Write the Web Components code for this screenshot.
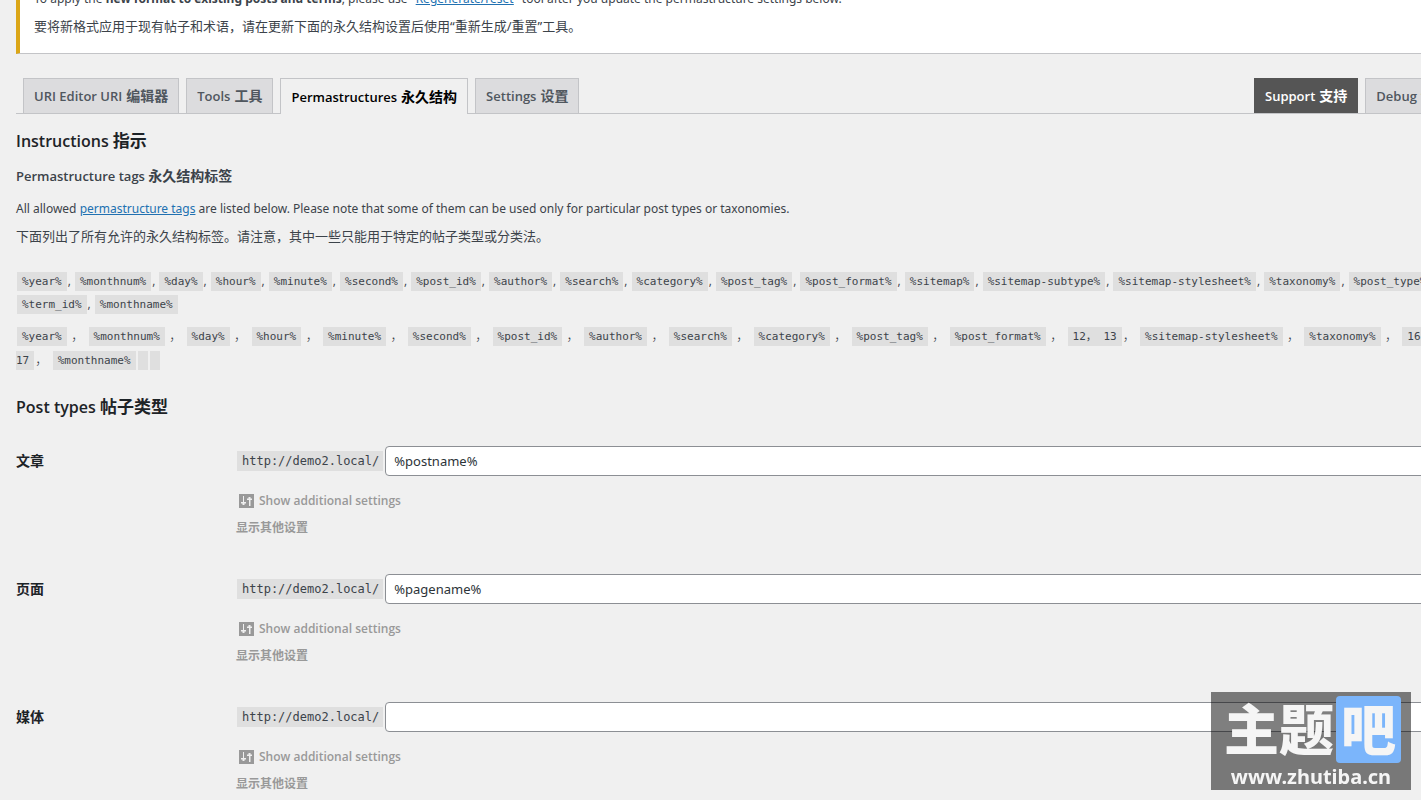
<!DOCTYPE html>
<html lang="en">
<head>
<meta charset="utf-8">
<title>Permalink Manager</title>
<style>
  html { overflow: hidden; background: #f0f0f0; }
  body {
    margin: 0; color: #3c434a; overflow: hidden;
    font: 12px/20px "Noto Sans", "Noto Sans CJK SC", sans-serif;
    --zh: 13px; --line: #c3c4c7;
    --semi: "Open Sans", "Noto Sans CJK SC", sans-serif;
  }
</style>
</head>
<body>
<permalink-page></permalink-page>
<site-watermark></site-watermark>

<script>
const define = (name, html) => customElements.define(name, class extends HTMLElement {
  connectedCallback() {
    if (this.shadowRoot) return;
    const t = document.createElement('template');
    t.innerHTML = typeof html === 'function' ? html(this) : html;
    this.attachShadow({ mode: 'open' }).append(t.content.cloneNode(true));
  }
});

/* warning notice */
define('admin-notice', `
<style>
  :host { display: block; background: #fff; border: 1px solid var(--line); border-left: 4px solid #dba617; padding: 12px 14px 10px; }
</style><slot></slot>`);

/* navigation tabs */
define('nav-tabs', `
<style>
  :host { display: block; }
  nav { display: flex; gap: 7px; padding-left: 7px; border-bottom: 1px solid var(--line); }
  .end { display: flex; gap: 7px; margin-left: auto; width: 187px; }
</style>
<nav><slot></slot><div class="end"><slot name="end"></slot></div></nav>`);

define('nav-tab', el => `
<style>
  :host { display: block; flex: none; }
  a { display: flex; align-items: center; gap: 4px; box-sizing: border-box; height: 35px; padding: 0 10px; border: 1px solid var(--line); border-bottom: 0;
      background: #dcdcde; color: #50575e; font: 600 13px/20px var(--semi); text-decoration: none; white-space: nowrap; }
  span { font-size: 14px; }
  :host([active]) a { background: #f0f0f0; color: #000; height: 36px; margin-bottom: -1px; }
  :host([strong]) a { background: #555; border-color: #555; color: #fff; }
</style>
<a href="#"><slot></slot><span lang="zh">${el.getAttribute('zh')}</span></a>`);

/* list of inline code tags */
define('tag-list', el => {
  const wide = el.hasAttribute('wide');
  const tags = (wide
    ? '%year%|%monthnum%|%day%|%hour%|%minute%|%second%|%post_id%|%author%|%search%|%category%|%post_tag%|%post_format%|12， 13|%sitemap-stylesheet%|%taxonomy%|16， 17|%monthname%'
    : '%year%|%monthnum%|%day%|%hour%|%minute%|%second%|%post_id%|%author%|%search%|%category%|%post_tag%|%post_format%|%sitemap%|%sitemap-subtype%|%sitemap-stylesheet%|%taxonomy%|%post_type%|%term_id%|%monthname%').split('|');
  const body = tags.map((t, i) => {
    const last = i === tags.length - 1;
    const sep = last ? '' : wide ? (t[0] === '%' ? ' ' : '') + '<span class="comma">，</span> ' : ', ';
    const words = t.split(' ').map(w => `<span>${w}</span>`).join(' ');
    return `<code>${words}</code>${sep}`;
  }).join('');
  return `
<style>
  :host { display: block; line-height: 23px; font-family: var(--semi); }
  :host([wide]) { line-height: 24px; font-size: 13px; }
  p { margin: 0; }
  .comma { font-family: "Noto Sans CJK SC", sans-serif; font-size: var(--zh); font-weight: 300; line-height: 1; }
  code { font: 11px/1 "DejaVu Sans Mono", "Noto Sans CJK SC", monospace; padding: 3px 5px; margin: 0 1px; background: #dfdfdf; }
</style>
<p>${body}${wide ? '<code></code><code></code>' : ''}</p>`;
});

/* one permastructure field */
define('permastruct-field', el => `
<style>
  :host { display: grid; grid-template-columns: 220px 1fr; height: 128px; }
  label { font-size: 14px; font-weight: 600; color: #1d2327; line-height: 30px; }
  .row { display: flex; align-items: center; gap: 2px; padding-left: 1px; height: 30px; }
  code { font: 12px/14px "DejaVu Sans Mono", monospace; padding: 3px 4px 3px 5px; background: #dfdfdf; }
  input { flex: 1; min-width: 0; box-sizing: border-box; height: 30px; border: 1px solid #8c8f94; border-radius: 4px; background: #fff; padding: 0 8px; font: 13px "Noto Sans", sans-serif; color: #2c3338; }
  a { display: block; color: #999; font-family: var(--semi); text-decoration: none; margin-top: 15px; }
  .top { display: flex; align-items: center; gap: 5px; padding-left: 3px; font-weight: 600; }
  .zh { line-height: 20px; margin-top: 7px; font-weight: 600; }
</style>
<label for="f">${el.getAttribute('label')}</label>
<div>
  <div class="row"><code>http://demo2.local/</code><input id="f" type="text" value="${el.getAttribute('value') || ''}"></div>
  <a href="#"><div class="top"><svg width="15" height="14" viewBox="0 0 15 14"><rect width="15" height="14" fill="#999"/><path d="M4 2h1v6h2v1.500H5.500V11h-2V9.500H2V8h2zM10 12h1.500V6H13V4.500h-1.500V3h-2v1.500H8V6h2z" fill="#f0f0f0"/></svg>Show additional settings</div>
  <div class="zh" lang="zh">显示其他设置</div></a>
</div>`);

/* overlay stamp */
define('site-watermark', `
<style>
  :host { position: fixed; right: 10px; bottom: 10px; width: 200px; height: 98px; background: rgba(0,0,0,.5); color: #f5f5f5; pointer-events: none; text-align: center; }
  .name { display: flex; justify-content: flex-end; margin: 4px 10px 0 12px; height: 67px; font: 900 55px/60px "Noto Sans CJK SC", sans-serif; }
  .name b { width: 65px; margin-left: 2px; border-radius: 4px; background: #7bb5fb; font-weight: 900; }
  .url { font: 700 20px/28px "Noto Sans", sans-serif; }
</style>
<div class="name">主题<b>吧</b></div><div class="url">www.zhutiba.cn</div>`);

define('permalink-page', `
<style>
  :host { display: block; margin: -24px -20px 0 16px; }
  p { margin: 0 0 7px; }
  [lang=zh] { font-size: var(--zh); }
  a { color: #2271b1; }
  h3 { margin: 0; font: 600 16px/24px var(--semi); color: #1d2327; }
  h3 span { font-size: 17px; }
  h4 { margin: 13px 0; font: 600 13px/20px var(--semi); }
  h4 span { font-size: 14px; }
  nav-tabs { margin: 24px 0 15px; }
  .tags { margin-top: 23px; }
  .second { margin-top: 8px; }
  .types { margin: 24px 0 27px; }
</style>
<admin-notice>
  <p>To apply the <b>new format to existing posts and terms</b>, please use "<a href="#">Regenerate/reset</a>" tool after you update the permastructure settings below.</p>
  <p lang="zh">要将新格式应用于现有帖子和术语，请在更新下面的永久结构设置后使用“重新生成/重置”工具。</p>
</admin-notice>
<nav-tabs>
  <nav-tab zh="编辑器">URI Editor URI</nav-tab>
  <nav-tab zh="工具">Tools</nav-tab>
  <nav-tab zh="永久结构" active>Permastructures</nav-tab>
  <nav-tab zh="设置">Settings</nav-tab>
  <nav-tab slot="end" zh="支持" strong>Support</nav-tab>
  <nav-tab slot="end" zh="调试">Debug</nav-tab>
</nav-tabs>
<h3>Instructions <span>指示</span></h3>
<h4>Permastructure tags <span>永久结构标签</span></h4>
<p>All allowed <a href="#">permastructure tags</a> are listed below. Please note that some of them can be used only for particular post types or taxonomies.</p>
<p lang="zh">下面列出了所有允许的永久结构标签。请注意，其中一些只能用于特定的帖子类型或分类法。</p>
<tag-list class="tags"></tag-list>
<tag-list class="second" wide></tag-list>
<h3 class="types">Post types <span>帖子类型</span></h3>
<permastruct-field label="文章" value="%postname%"></permastruct-field>
<permastruct-field label="页面" value="%pagename%"></permastruct-field>
<permastruct-field label="媒体"></permastruct-field>`);
</script>
</body>
</html>
